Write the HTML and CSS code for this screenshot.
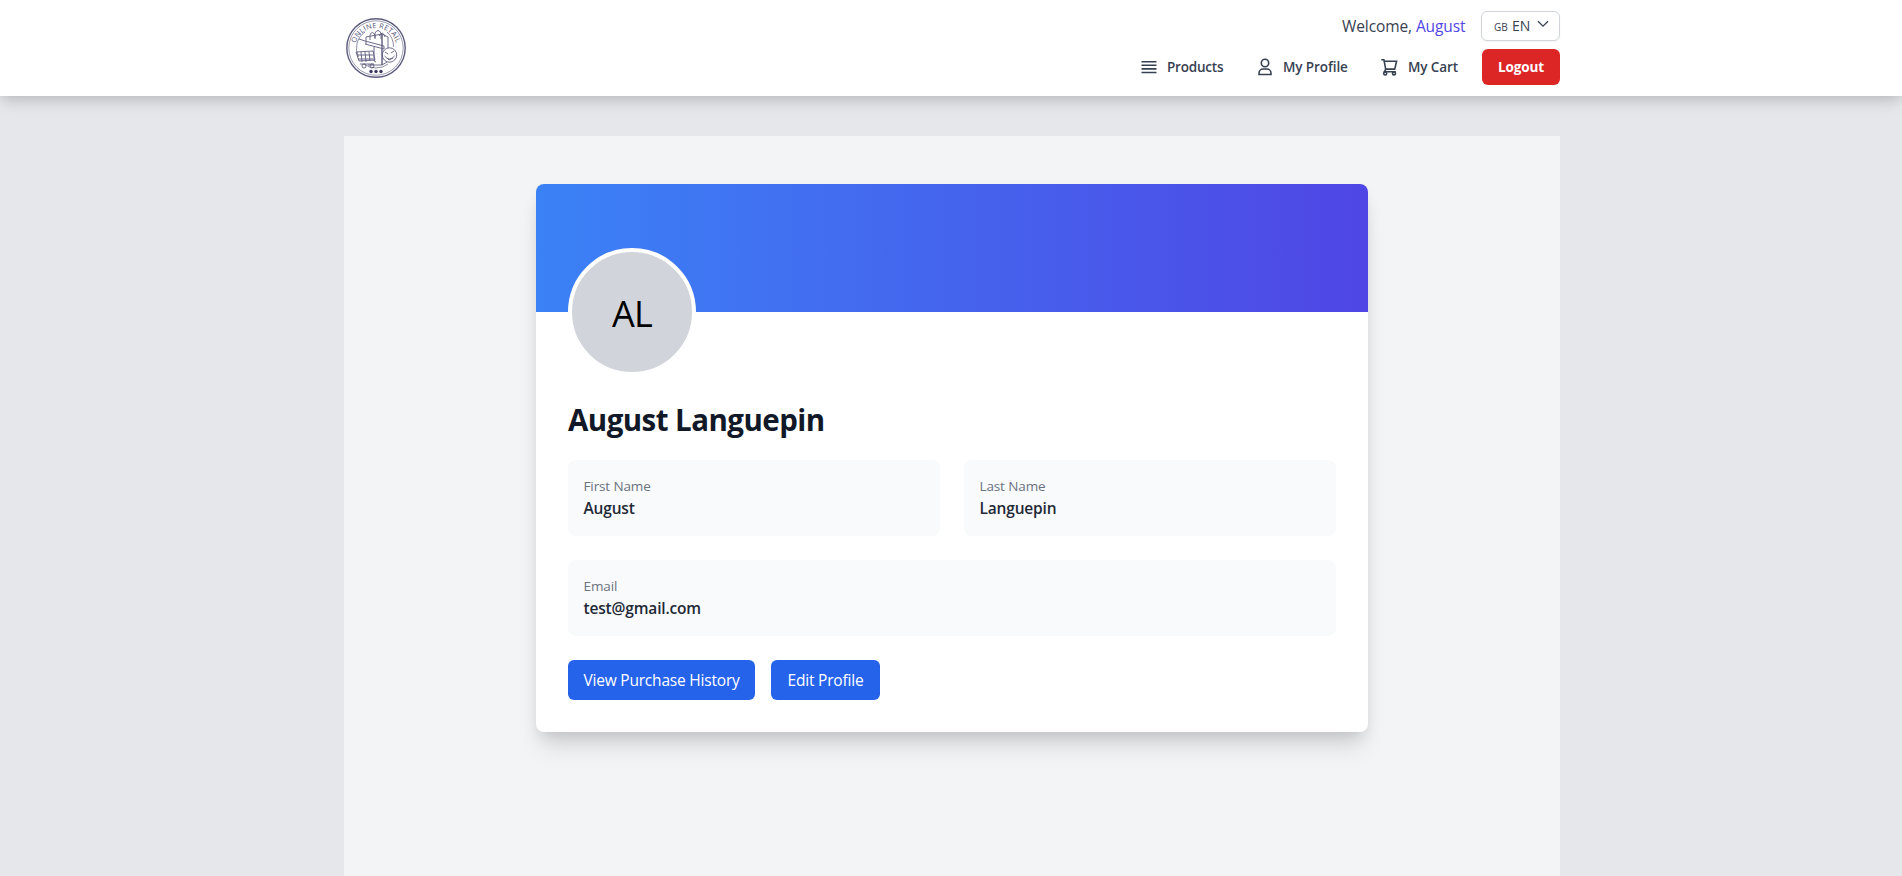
FILE: index.html
```html
<!DOCTYPE html>
<html lang="en">
<head>
<meta charset="utf-8">
<title>My Profile</title>
<link rel="stylesheet" href="styles.css">
</head>
<body>
<header class="header">
  <div class="header-inner">
    <svg class="logo" viewBox="0 0 64 64" fill="none" stroke="#5d5b7e" stroke-width=".9">
      <defs><path id="arc" d="M11 33A21 21 0 1 1 53 33"/></defs>
      <circle cx="32" cy="32" r="29.2" stroke-width="1.4"/>
      <circle cx="32" cy="32" r="27.2" stroke-width=".6"/>
      <path d="M14.500 41A19.500 19.500 0 0 1 21 16M43 16A19.500 19.500 0 0 1 49.500 31M20 48q5 4 12 4t12-4" stroke-width=".7"/>
      <text class="logo-text" stroke="none"><textPath href="#arc" startOffset="50%" text-anchor="middle">ONLINE RETAIL</textPath></text>
      <path d="M22 28V21l16-3v31H24M38 18l6 3v11M38 18v31l5-3M26 24v-5q2-5 5 0v4M31 22v-5q3-5 6 0v6M35 20q4-6 6 1"/>
      <path d="M15 23l6 2 19 5v3l-19-5M12 36l17-1 2 9-16 1zM13 39h16M14 43h15M17 36l1 10M21 36l1 10M25 36l1 9M30 31v14l2 1M16 48h14"/>
      <circle cx="20" cy="50" r="2"/><circle cx="28" cy="50" r="2"/>
      <circle cx="45.500" cy="39" r="7.200"/>
      <path d="M41 36l3 2M47 37l3-2M40.500 40q5 6 10 0M43 42l2 2 4-2"/>
      <g fill="#3b3963" stroke="none"><circle cx="27" cy="55.500" r="1.700"/><circle cx="32" cy="55.500" r="1.700"/><circle cx="37" cy="55.500" r="1.700"/></g>
    </svg>
    <div class="header-right">
      <div class="top-row">
        <span class="welcome">Welcome, <span class="user">August</span></span>
        <button class="lang"><span class="flag">GB</span><span class="code">EN</span>
          <svg class="chevron" viewBox="0 0 12 8" fill="none" stroke="#374151" stroke-width="1.300"><path d="M1 1.200l5 5 5-5"/></svg>
        </button>
      </div>
      <nav class="nav">
        <a class="nav-item products"><svg class="icon" viewBox="0 0 16 18" stroke="#374151" stroke-width="1.600"><path d="M.5 3.700h15M.5 7.300h15M.5 10.900h15M.5 14.500h15"/></svg><span>Products</span></a>
        <a class="nav-item profile"><svg class="icon" viewBox="0 0 16 18" fill="none" stroke="#374151" stroke-width="1.600"><circle cx="8" cy="5" r="3.700"/><path d="M2 16.500v-1.300a4.200 4.200 0 0 1 4.200-4.200h3.600a4.200 4.200 0 0 1 4.200 4.200v1.300z"/></svg><span>My Profile</span></a>
        <a class="nav-item cart"><svg class="icon cart-icon" viewBox="0 0 17 18" fill="none" stroke="#374151" stroke-width="1.600"><path d="M.3 1.800h2.600l1.800 9.300-1.200 2.600h11.200M3.300 3.200h12.300l-1.900 7.900h-9"/><circle cx="4.200" cy="15.400" r="1.500"/><circle cx="13" cy="15.400" r="1.500"/></svg><span>My Cart</span></a>
        <button class="logout">Logout</button>
      </nav>
    </div>
  </div>
</header>
<main class="main">
  <section class="card">
    <div class="banner"><div class="avatar"><span>AL</span></div></div>
    <div class="body">
      <h1 class="name">August Languepin</h1>
      <div class="grid">
        <div class="tile"><p class="label">First Name</p><p class="value">August</p></div>
        <div class="tile"><p class="label">Last Name</p><p class="value">Languepin</p></div>
        <div class="tile wide"><p class="label">Email</p><p class="value">test@gmail.com</p></div>
      </div>
      <div class="actions"><button class="btn history">View Purchase History</button><button class="btn edit">Edit Profile</button></div>
    </div>
  </section>
</main>
</body>
</html>
```
FILE: styles.css
```css
* { box-sizing: border-box; }
html, body { height: 100%; }
body { margin: 0; display: flex; flex-direction: column; background: #e5e7eb; color: #000; font: 16px/24px "Open Sans", "Noto Sans", sans-serif; overflow: hidden; }
p, h1 { margin: 0; }
button { border: 0; font: inherit; padding: 0; white-space: nowrap; }
.header { flex: none; height: 96px; background: #fff; box-shadow: 0 10px 15px -3px rgb(0 0 0 / .1), 0 0 12px rgb(0 0 0 / .14); }
.header-inner { width: 1216px; margin: 0 auto; height: 96px; display: flex; align-items: center; justify-content: space-between; position: relative; left: 1px; }
.logo { width: 64px; height: 64px; margin-bottom: 1px; }
.logo-text { font: 7.2px "Open Sans", sans-serif; letter-spacing: .25px; fill: #514f74; }
.header-right { display: flex; flex-direction: column; align-items: flex-end; gap: 8px; }
.top-row { display: flex; align-items: center; gap: 16px; height: 30px; }
.welcome { width: 123px; white-space: nowrap; font-size: 15.5px; letter-spacing: -.1px; color: #374151; }
.user { color: #4f46e5; }
.lang { width: 79px; height: 30px; background: #fff; color: #374151; border: 1px solid #d1d5db; border-radius: 6px; box-shadow: 0 1px 2px rgb(0 0 0 / .05); display: flex; align-items: center; justify-content: flex-start; padding-left: 12px; font-size: 14px; font-weight: 500; }
.flag { font-size: 10px; width: 18px; padding-top: 2px; font-weight: 500; text-align: left; }
.code { width: 25px; text-align: left; }
.chevron { width: 12px; height: 8px; margin-top: -4px; }
.nav { display: flex; align-items: center; height: 36px; color: #374151; font-size: 13.5px; font-weight: 600; }
.nav-item { display: flex; align-items: center; gap: 10px; white-space: nowrap; letter-spacing: -.1px; }
.icon { flex: none; width: 16px; height: 18px; }
.products { width: 116px; letter-spacing: -.2px; }
.profile { width: 125px; }
.cart { width: 100px; }
.cart-icon { width: 17px; margin: 0 0 0 -1px; }
.logout { width: 78px; height: 36px; background: #dc2626; color: #fff; border-radius: 6px; font-size: 13.5px; font-weight: 700; letter-spacing: -.15px; }
.main { width: 1216px; margin: 40px auto 0; position: relative; left: 1px; flex: 1; padding-top: 48px; background: #f3f4f6; }
.card { width: 832px; height: 548px; margin: 0 auto; background: #fff; border-radius: 8px; box-shadow: 0 20px 25px -5px rgb(0 0 0 / .1), 0 8px 16px -4px rgb(0 0 0 / .13); }
.banner { height: 128px; border-radius: 8px 8px 0 0; padding: 64px 32px 0; background: linear-gradient(to right, #3b82f6, #4f46e5); }
.avatar { width: 128px; height: 128px; padding-top: 4px; border: 4px solid #fff; border-radius: 50%; background: #d1d5db; display: flex; align-items: center; justify-content: center; font-size: 36px; line-height: 40px; letter-spacing: -.7px; }
.body { padding: 90px 32px 32px; }
.name { color: #111827; font-size: 29.5px; line-height: 36px; font-weight: 700; letter-spacing: -.55px; white-space: nowrap; }
.grid { display: grid; grid-template-columns: 1fr 1fr; gap: 24px; margin-top: 22px; }
.tile { height: 76px; padding: 16px 15.5px; border-radius: 8px; background: #f9fafb; }
.wide { grid-column: span 2; }
.label { font-size: 13.5px; line-height: 20px; color: #6b7280; letter-spacing: -.12px; }
.value { font-size: 15.5px; color: #1f2937; font-weight: 600; letter-spacing: -.17px; }
.actions { display: flex; gap: 16px; margin-top: 24px; }
.btn { height: 40px; border-radius: 6px; background: #2563eb; color: #fff; font-size: 15.5px; letter-spacing: -.2px; }
.history { width: 187px; }
.edit { width: 109px; }
```
